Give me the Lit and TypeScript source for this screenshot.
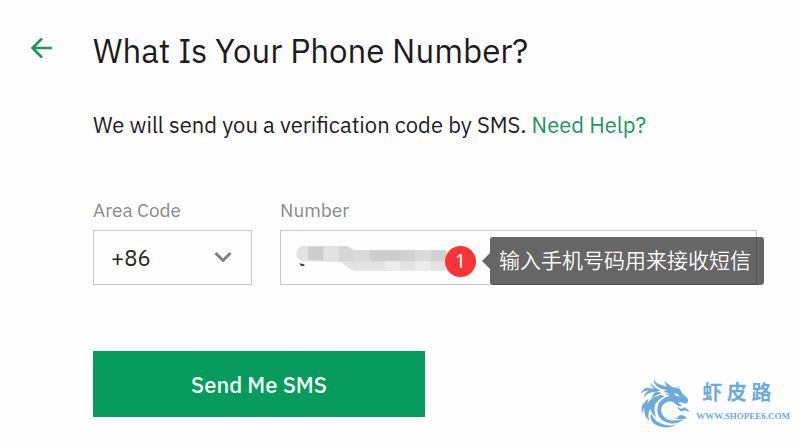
import { LitElement, html, css } from "lit";
import { customElement, state } from "lit/decorators.js";

@customElement("site-watermark")
class SiteWatermark extends LitElement {
  static styles = css`
    :host {
      display: flex;
      align-items: center;
      gap: 5px;
      color: #6cabd9;
    }
    .dragon {
      width: 51px;
      height: 49px;
      display: block;
      fill: currentColor;
    }
    .words {
      display: flex;
      flex-direction: column;
    }
    .name {
      padding-left: 6px;
      font: 700 20px/24px "Noto Sans CJK SC", sans-serif;
    }
    .site {
      font: bold 9px/24px "Liberation Serif", serif;
    }
  `;

  render() {
    return html`
      <svg class="dragon" viewBox="35 28 152 146" aria-hidden="true">
        <path d="M76 29 Q83 44 105 47 L114 51 Q112 41 106 34 Q121 43 130 52 Q142 52 150 58 L143 46 Q157 58 161 71 L172 81 Q180 87 178 93 L175 100 L165 101 L160 97 L148 99 L160 106 L155 110 Q142 106 135 97 Q124 93 113 98 Q99 105 98 119 Q99 139 116 148 Q137 156 167 148 Q148 163 124 160 Q95 154 88 132 Q82 107 100 90 Q112 80 126 78 L111 75 L122 70 L104 67 L115 61 Q96 59 84 48 Q75 39 76 29Z M146 73 L135 69 L145 80 L153 79Z" fill-rule="evenodd"/>
        <path d="M66 39 Q77 55 96 62 L84 65 L101 70 Q78 76 68 91 Q72 72 82 66 Q57 66 46 84 Q48 69 61 62 Q48 61 38 72 Q40 60 54 54 L77 58 Q67 50 66 39Z"/>
        <path d="M97 75 L108 80 Q88 88 80 105 Q75 122 83 141 Q69 133 66 117 Q55 132 63 153 Q44 138 48 113 Q42 121 42 133 Q35 110 48 98 Q53 92 60 87 L57 102 Q68 82 97 75Z"/>
        <path d="M69 131 Q77 157 109 164 Q129 169 145 163 Q130 174 108 172 Q77 169 69 151 Q63 141 69 131Z"/>
        <path d="M147 109 Q154 119 164 115 Q170 109 173 117 L185 125 L174 124 L168 120 Q159 128 150 119Z"/>
        <path d="M151 137 Q165 132 175 145 Q152 151 133 143 L146 144Z"/>
      </svg>
      <div class="words">
        <span class="name" lang="zh-CN">虾 皮 路</span>
        <span class="site">WWW.SHOPEE6.COM</span>
      </div>
    `;
  }
}

@customElement("step-hint")
class StepHint extends LitElement {
  static styles = css`
    :host {
      display: flex;
      align-items: center;
      gap: 6px;
    }
    .step {
      width: 31px;
      height: 31px;
      border-radius: 50%;
      background: #fb3437;
      color: #fff;
      font: 20px/30px "Noto Sans", sans-serif;
      text-align: center;
    }
    .tip {
      display: flex;
      align-items: center;
    }
    .pointer {
      width: 8px;
      height: 16px;
      background: #666;
      clip-path: polygon(0 50%, 100% 0, 100% 100%);
    }
    .text {
      padding: 0 13px 4px 9px;
      border-radius: 3px;
      background: rgba(0, 0, 0, 0.6);
      color: #fff;
      font: 350 21px/44px "Noto Sans CJK SC", sans-serif;
      white-space: nowrap;
    }
  `;

  render() {
    return html`
      <span class="step">1</span>
      <span class="tip">
        <span class="pointer"></span>
        <span class="text" lang="zh-CN"><slot></slot></span>
      </span>
    `;
  }
}

@customElement("app-root")
class AppRoot extends LitElement {
  @state() private areaCode = "+86";

  static styles = css`
    :host {
      display: block;
      position: relative;
      min-height: 100vh;
      box-sizing: border-box;
      padding: 29px 43px 26px 29px;
      background: #fefefe;
      color: #1c1c1c;
      font-family: "IBM Plex Sans", Roboto, sans-serif;
    }
    * {
      box-sizing: border-box;
    }
    .page {
      display: grid;
      grid-template-columns: 24px 1fr;
      column-gap: 40px;
    }
    .back {
      align-self: start;
      margin-top: 7px;
      padding: 0;
      border: 0;
      background: none;
      height: 24px;
      cursor: pointer;
    }
    .back svg {
      display: block;
      width: 24px;
      height: 24px;
      fill: none;
      stroke: #1c965f;
      stroke-width: 2.6;
    }
    h1 {
      margin: 0;
      font-size: 33px;
      font-weight: 400;
      line-height: 44px;
    }
    .lead {
      margin: 36px 0 0;
      font-size: 22px;
      font-weight: 450;
      line-height: 32px;
    }
    .lead a {
      color: #1c965f;
      text-decoration: none;
    }
    .fields {
      display: grid;
      grid-template-columns: 1fr 3fr;
      column-gap: 28px;
      margin-top: 57px;
    }
    label {
      display: block;
      color: #8a8a8a;
      font-size: 19px;
      font-weight: 450;
      line-height: 24px;
      margin-bottom: 8px;
    }
    .box {
      position: relative;
    }
    select,
    input {
      display: block;
      appearance: none;
      width: 100%;
      height: 55px;
      padding: 0 17px;
      border: 1px solid #c8c8c8;
      border-radius: 0;
      background: #fefefe;
      color: #262626;
      font-family: inherit;
      font-size: 22px;
      font-weight: 450;
    }
    .chevron {
      position: absolute;
      right: 20px;
      top: 21px;
      width: 18px;
      height: 12px;
      fill: none;
      stroke: #808080;
      stroke-width: 3;
      pointer-events: none;
    }
    .mask {
      position: absolute;
      left: 16px;
      top: 16px;
      width: 150px;
      height: 25px;
      pointer-events: none;
    }
    step-hint {
      position: absolute;
      left: 165px;
      top: 7px;
    }
    .send {
      display: block;
      width: 50%;
      height: 66px;
      margin-top: 66px;
      border: 0;
      background: #069a5c;
      color: #f4fff9;
      font-family: inherit;
      font-size: 22px;
      font-weight: 500;
      cursor: pointer;
    }
    site-watermark {
      position: absolute;
      right: 10px;
      bottom: 15px;
    }
  `;

  private pickCode(e: Event) {
    this.areaCode = (e.target as HTMLSelectElement).value;
  }

  render() {
    return html`
      <main class="page">
        <button class="back" type="button" aria-label="Back">
          <svg viewBox="0 0 24 24"><path d="M23 12H3M13 2.5L3.500 12L13 21.500"/></svg>
        </button>
        <form @submit=${(e: Event) => e.preventDefault()}>
          <h1>What Is Your Phone Number?</h1>
          <p class="lead">
            We will send you a verification code by SMS.
            <a href="#help">Need Help?</a>
          </p>
          <div class="fields">
            <div>
              <label for="code">Area Code</label>
              <div class="box">
                <select id="code" .value=${this.areaCode} @change=${this.pickCode}>
                  <option>+86</option>
                </select>
                <svg class="chevron" viewBox="0 0 18 12"><path d="M1.500 2L9 9.500L16.500 2"/></svg>
              </div>
            </div>
            <div>
              <label for="number">Number</label>
              <div class="box">
                <input id="number" type="tel" />
                <svg class="mask" viewBox="78 168 450 75" aria-hidden="true">
                  <path fill="#e2e2e2" d="M96 168H230Q248 172 250 180H528V242H250Q235 236 228 228L212 216L100 214Q78 208 79 190Q82 172 96 168Z"/>
                  <path fill="#cdcdcd" d="M114 170h46v40h-46z"/>
                  <path fill="#d5d5d5" d="M206 170h26l18 12v32h-44z"/>
                  <path fill="#cecece" d="M298 181h92v33h-92z"/>
                  <path fill="#d1d1d1" d="M390 181h46v33h-46zM482 181h46v33h-46z"/>
                  <path fill="#dadada" d="M436 181h46v33h-46zM250 181h48v33h-48z"/>
                  <path fill="#ececec" d="M344 214h46v28h-46zM436 214h46v28h-46z"/>
                  <path fill="#444" d="M88 220L103 223V228H93Z"/>
                </svg>
                <step-hint>输入手机号码用来接收短信</step-hint>
              </div>
            </div>
          </div>
          <button class="send" type="submit">Send Me SMS</button>
        </form>
      </main>
      <site-watermark></site-watermark>
    `;
  }
}
